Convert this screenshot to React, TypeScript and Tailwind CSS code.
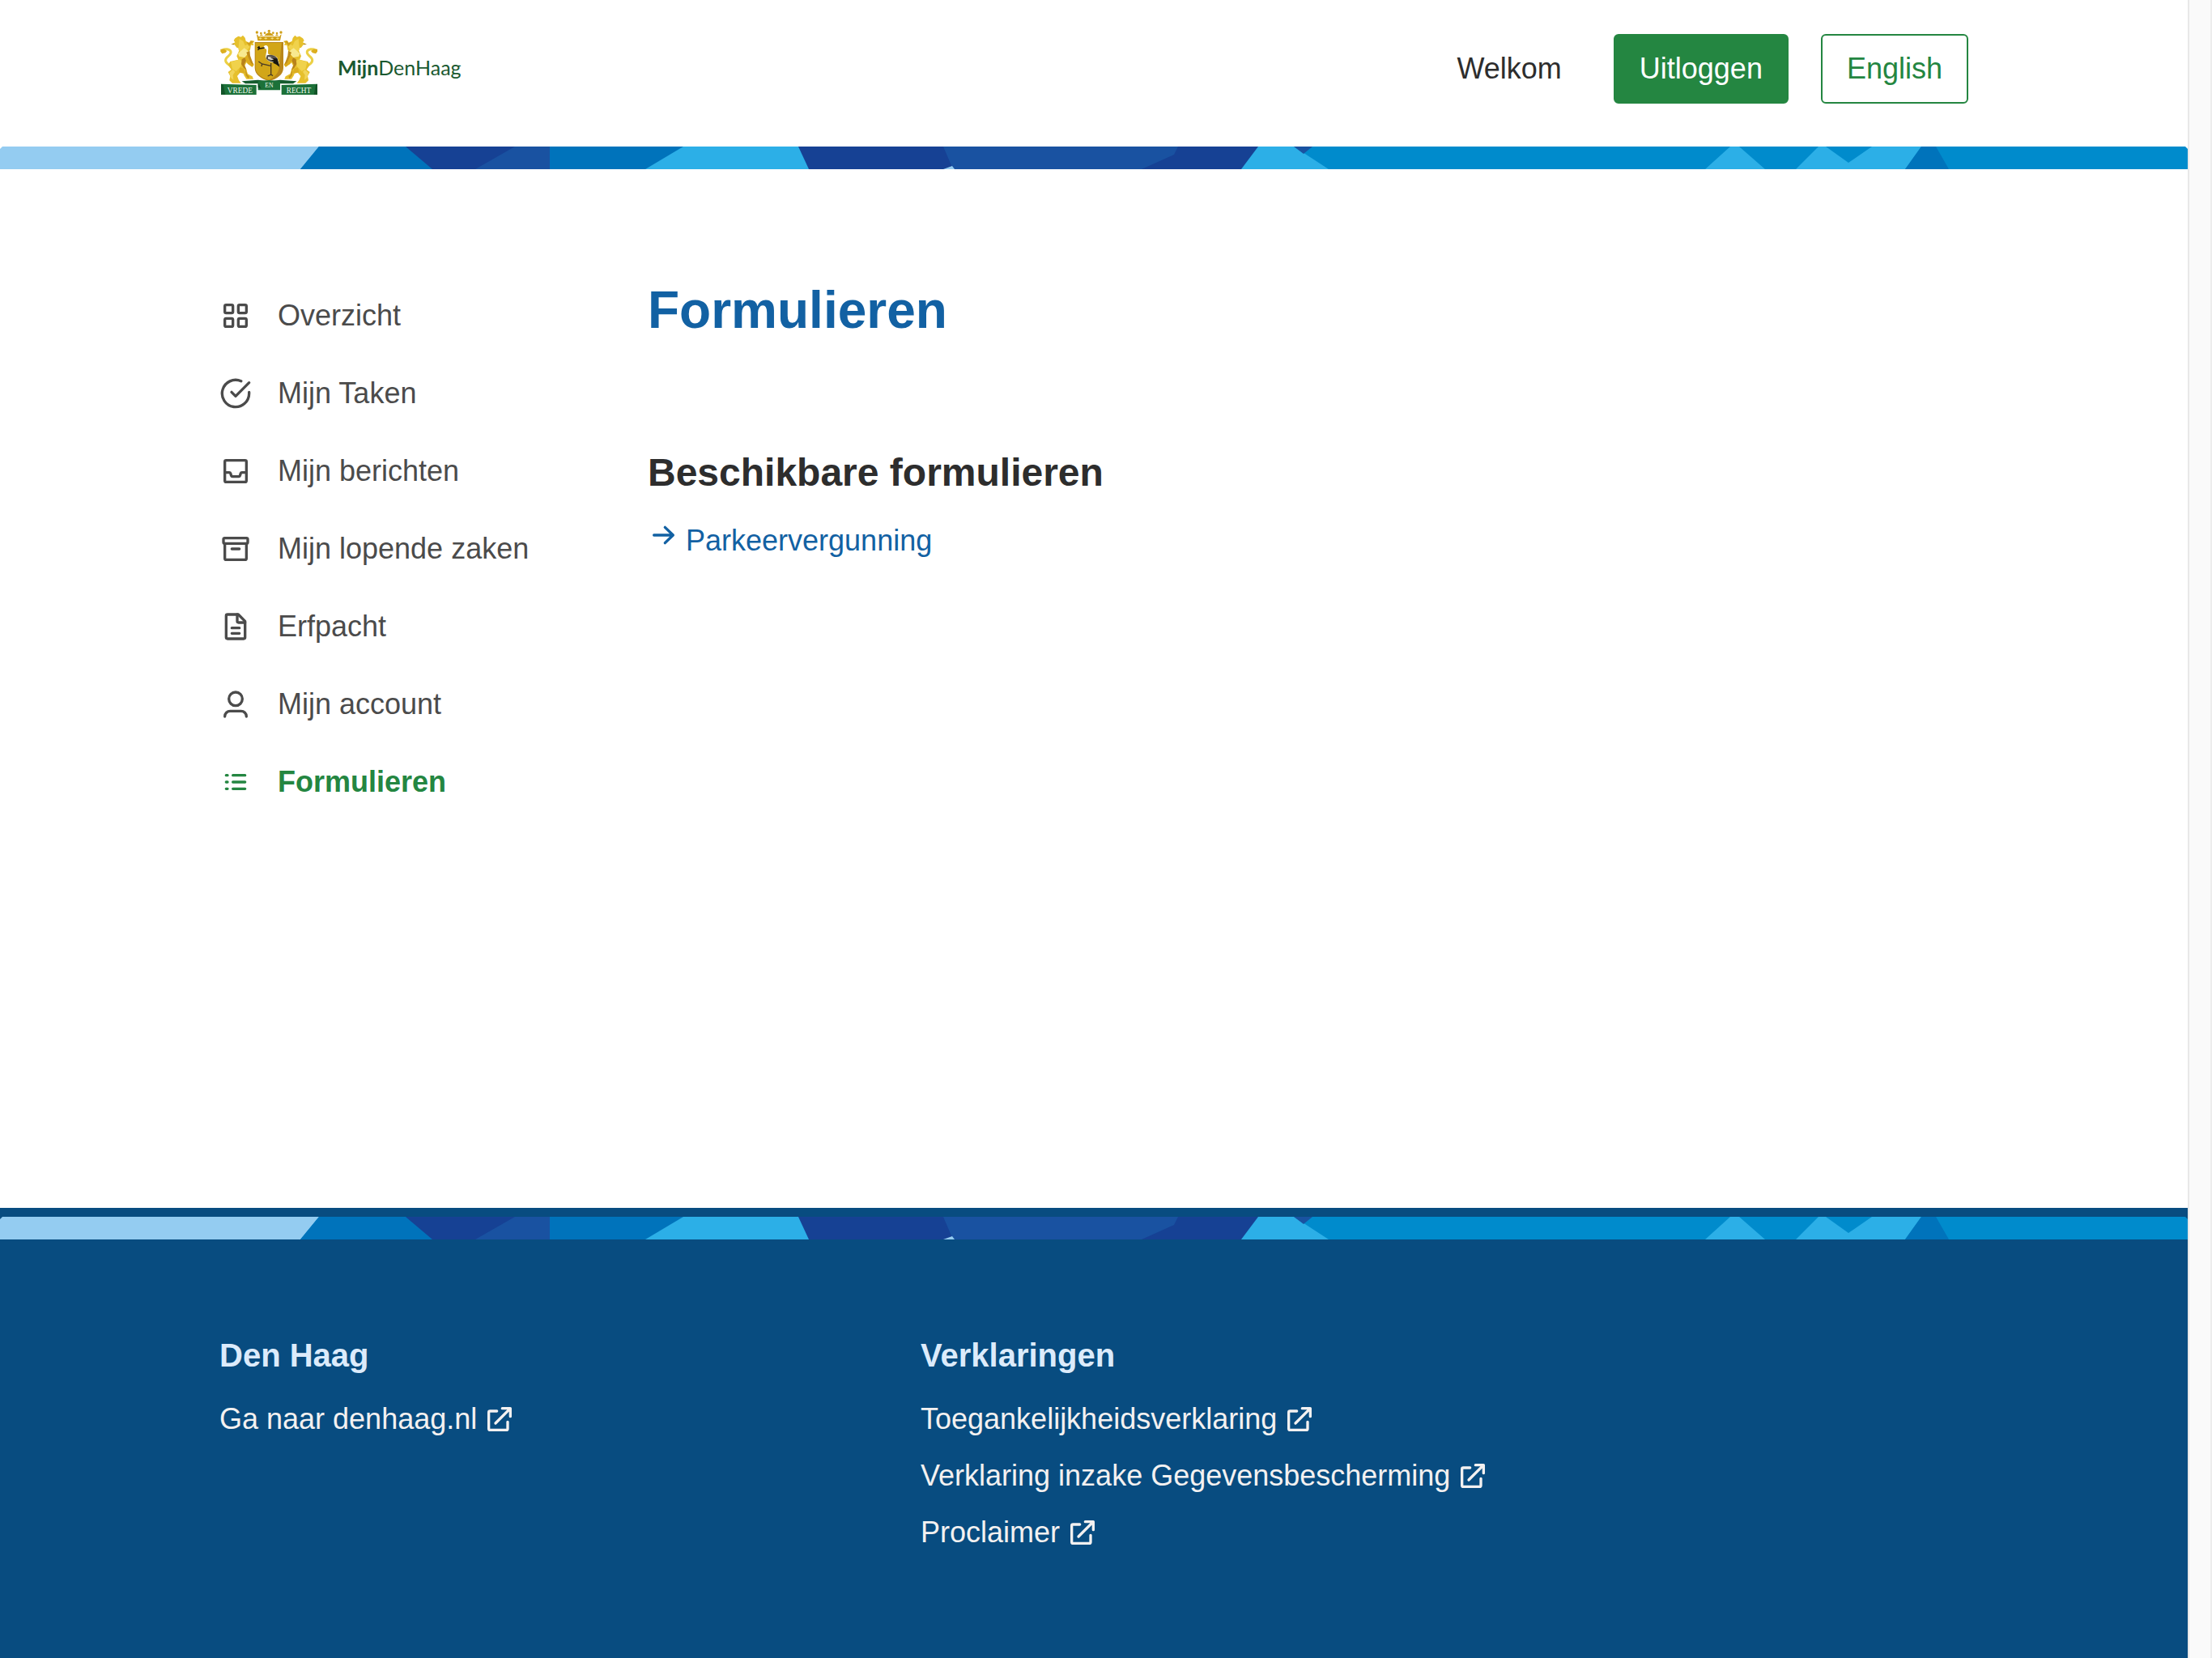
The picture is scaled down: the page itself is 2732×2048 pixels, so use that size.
import type { ReactNode } from "react";

function Icon({ children, className = "" }: { children: ReactNode; className?: string }) {
  return (
    <svg
      viewBox="0 0 24 24"
      fill="none"
      stroke="currentColor"
      strokeWidth="2"
      strokeLinecap="round"
      strokeLinejoin="round"
      aria-hidden="true"
      className={`size-10 shrink-0 ${className}`}
    >
      {children}
    </svg>
  );
}

const GridIcon = () => (
  <Icon>
    <rect x="4" y="4" width="6" height="6" rx="1" />
    <rect x="14" y="4" width="6" height="6" rx="1" />
    <rect x="4" y="14" width="6" height="6" rx="1" />
    <rect x="14" y="14" width="6" height="6" rx="1" />
  </Icon>
);

const CheckIcon = () => (
  <Icon>
    <path d="M22 11.08V12a10 10 0 1 1-5.93-9.14" />
    <path d="M22 4 12 14.01l-3-3" />
  </Icon>
);

const InboxIcon = () => (
  <Icon>
    <rect x="4" y="4" width="16" height="16" rx="1" />
    <path d="M4 13h3.3a1 1 0 0 1 .95.7l.5 1.6a1 1 0 0 0 .95.7h4.6a1 1 0 0 0 .95-.7l.5-1.6a1 1 0 0 1 .95-.7H20" />
  </Icon>
);

const ArchiveIcon = () => (
  <Icon>
    <rect x="3" y="4" width="18" height="4" rx="1" />
    <path d="M4 8v11a1 1 0 0 0 1 1h14a1 1 0 0 0 1-1V8M9.2 12h5.6" />
  </Icon>
);

const DocumentIcon = () => (
  <Icon>
    <path d="M6 3h8l5 5v12a1 1 0 0 1-1 1H6a1 1 0 0 1-1-1V4a1 1 0 0 1 1-1z" />
    <path d="M13.2 3v5a1 1 0 0 0 1 1H19M9.2 13h5.6M9.2 17h5.6" />
  </Icon>
);

const UserIcon = () => (
  <Icon>
    <circle cx="12" cy="8" r="5" />
    <path d="M4 21a4 4 0 0 1 4-4h8a4 4 0 0 1 4 4" />
  </Icon>
);

const ListIcon = () => (
  <Icon>
    <path d="M10 7h9M10 12h9M10 17h9M5 7h1M5 12h1M5 17h1" />
  </Icon>
);

const ExternalIcon = () => (
  <Icon>
    <path d="M10 6H5a1 1 0 0 0-1 1v12a1 1 0 0 0 1 1h12a1 1 0 0 0 1-1v-5M9 15 20 4M14 4h6v6" />
  </Icon>
);

const ArrowIcon = () => (
  <Icon className="mb-[14px]">
    <path d="M4.6 12h14M12.8 6.2l6 5.8-6 5.8" />
  </Icon>
);

function Lion() {
  return (
    <>
      <path
        d="M102 184C86 176 78 166 86 155c8-9 19-14 16-24-4-10-21-11-32-5"
        fill="none"
        stroke="#ecd045"
        strokeWidth="9"
      />
      <path d="M64 122l14 0 10 7-6 7-12 3-6-8z" fill="#dcae20" />
      <path
        d="M118 82L130 74 140 77 147 71 155 80 158 92 170 98 176 91 190 92 184 100 187 108 177 107 174 124 168 134 172 150 179 165 188 180 182 188 174 182 166 178 160 172 154 184 160 198 165 214 182 223 186 233 160 233 151 219 146 204 136 210 126 222 132 238 140 248 108 248 97 238 100 222 92 207 104 198 92 181 100 168 130 161 124 148 132 130 134 120 124 116 116 106 104 104 118 97 113 90z"
        fill="#e6c02c"
      />
      <path d="M134 84l14 8 7 17 13-6 4 12-14 16-20 4-8-12z" fill="#f0d24c" />
      <path d="M129 138l23-20 20 15-18 20-21-4z" fill="#f8e98f" />
      <path d="M154 153l18-20-2 17 9 15 8 15-6 8-16-12z" fill="#dcab1d" />
      <path d="M160 134l12-6 2 18 12 34-9-6-11-24z" fill="#c08c1a" />
      <path d="M102 170l32-10 12 8-8 20-16 16-14-8z" fill="#f0d24c" />
      <path d="M143 160l11-7 5 12-7 14 9 22-11-9-9-14z" fill="#b8821b" />
      <path d="M136 190l14 4 6 16-8 2-16-4z" fill="#dcae20" />
      <path d="M97 210l13-12 8 8-8 12 2 18-10-8z" fill="#f1d55a" />
      <path d="M156 190l7 26 8 8-4 8-10-14z" fill="#c9981b" />
      <path d="M103 103l12 0-2 3z" fill="#8f651b" />
      <path d="M160 96l11 3 5-8 12 2-10 8-8 10z" fill="#d1a01b" />
    </>
  );
}

function Crest() {
  return (
    <svg viewBox="60 48 366 246" className="h-[82px] w-[122px] shrink-0" role="img" aria-label="Wapen van Den Haag">
      <Lion />
      <g transform="translate(487 0) scale(-1 1)">
        <Lion />
      </g>
      {/* crown */}
      <g fill="#cf9f17">
        <path d="M202 91l-4-24 9 7 8-8 9 8 9-9 11-6 11 6 9 9 9-8 8 8 9-7-5 24z" />
        <circle cx="199" cy="60" r="5" />
        <circle cx="214" cy="63" r="4" />
        <circle cx="228" cy="62" r="4" />
        <circle cx="244" cy="55" r="5" />
        <circle cx="259" cy="62" r="4" />
        <circle cx="273" cy="63" r="4" />
        <circle cx="288" cy="60" r="5" />
      </g>
      <path d="M204 74h80" stroke="#fff" strokeWidth="3" />
      <g fill="#f6df7b">
        <path d="M205 82l7-3 6 3-6 4zM225 82l7-3 6 3-6 4zM249 82l7-3 6 3-6 4zM269 82l7-3 6 3-6 4z" />
      </g>
      {/* shield */}
      <path d="M191 96h106v96c0 23-23 42-53 48-30-6-53-25-53-48z" fill="#b9861a" />
      <path d="M194 99h96l-8 88c-2 24-18 40-38 49-28-7-50-24-50-45z" fill="#d2a618" />
      {/* stork */}
      <path d="M224 118c-3-10 12-14 16-4 3 9-3 18 2 27 9 4 25 3 32 13l8 22-16-6c-16 2-30-4-34-17-2-10 5-22 2-31z" fill="#fff" />
      <path d="M236 145c15-4 30 0 38 10l8 29-14-12c-14-3-29-5-35-16z" fill="#55504a" />
      <path d="M258 156l16 1 9 31-12-9-12-6 2-6-10-2z" fill="#17150f" />
      <path d="M240 150l14 2-5 3 13 5-8 3-14-5z" fill="#d8d6d2" />
      <path d="M227 117l-18 3-8-5M209 120l-7 5M209 120l-3-9" fill="none" stroke="#17150f" strokeWidth="4" />
      <path d="M251 174v42l-12 6M251 216l7 5M250 184l-32-7-13-9M218 177l-2 9" fill="none" stroke="#473a27" strokeWidth="4" />
      {/* ribbons */}
      <path d="M143 241l60-5 41 5 41-5 61 5-13 9H156z" fill="#155c2e" />
      <path d="M203 241l41-4 41 4v33h-82z" fill="#1c7139" />
      <path d="M203 246l12 23-12-5z" fill="#104c25" />
      <path d="M66 251l131 4v36H66z" fill="#1c7139" />
      <path d="M423 251l-133 4v36h133z" fill="#1c7139" />
      <path d="M66 251l8 3 8 37H66zM423 251l-6 3-7 37h13z" fill="#125429" />
      <g fill="#eef6ec" fontFamily="Liberation Serif, serif" textAnchor="middle">
        <text x="136" y="284" fontSize="28">VREDE</text>
        <text x="244" y="265" fontSize="23">EN</text>
        <text x="354" y="284" fontSize="28">RECHT</text>
      </g>
    </svg>
  );
}

/* Decorative band of overlapping coloured facets */
function Band() {
  return (
    <svg viewBox="0 0 2702 28" preserveAspectRatio="none" className="block h-7 w-full" aria-hidden="true">
      <path d="M380 0H2699l3 3V28H370z" fill="#008bcc" />
      <path d="M3 0H394L371 28H0V3z" fill="#94ccf1" />
      <path d="M394 0H850V28H371z" fill="#0073bb" />
      <path d="M501 0H679V28H534z" fill="#164194" />
      <path d="M636 0H679V28H587z" fill="#1952a1" />
      <path d="M844 0H990L1002 28H797z" fill="#2cafe7" />
      <path d="M986 0H1560V28H999z" fill="#164194" />
      <path d="M1165 0H1455L1450 10 1410 28H1177z" fill="#1952a1" />
      <path d="M1165 28L1176 24 1179 28z" fill="#94ccf1" />
      <path d="M1554 0H1598L1641 28H1533z" fill="#2cafe7" />
      <path d="M1598 0H1621L1610 9z" fill="#1952a1" />
      <path d="M2137 0H2148L2180 28H2106z" fill="#2cafe7" />
      <path d="M2246 0H2255L2283 20 2312 0H2373L2353 28H2218z" fill="#2cafe7" />
      <path d="M2373 0H2391L2407 28H2353z" fill="#0073bb" />
    </svg>
  );
}

const navItems = [
  { label: "Overzicht", icon: <GridIcon /> },
  { label: "Mijn Taken", icon: <CheckIcon /> },
  { label: "Mijn berichten", icon: <InboxIcon /> },
  { label: "Mijn lopende zaken", icon: <ArchiveIcon /> },
  { label: "Erfpacht", icon: <DocumentIcon /> },
  { label: "Mijn account", icon: <UserIcon /> },
  { label: "Formulieren", icon: <ListIcon />, active: true },
];

const footerColumns = [
  { title: "Den Haag", width: "w-[866px]", links: ["Ga naar denhaag.nl"] },
  {
    title: "Verklaringen",
    width: "flex-1",
    links: ["Toegankelijkheidsverklaring", "Verklaring inzake Gegevensbescherming", "Proclaimer"],
  },
];

export default function App() {
  return (
    <div className="flex min-h-screen bg-white font-['Liberation_Sans',Arial,sans-serif] text-[36px] leading-[54px] text-[#2d2d2d]">
      <div className="flex min-w-0 flex-1 flex-col">
        <header>
          <div className="mx-auto flex max-w-[2160px] items-start justify-between pt-9 pb-[53px]">
            <a href="#" className="flex items-center gap-6">
              <Crest />
              <span className="pt-3 font-[Lato,sans-serif] text-[25px] leading-8 text-[#1a5930]">
                <b className="font-bold">Mijn</b>DenHaag
              </span>
            </a>
            <div className="flex items-center pt-[6px]">
              <span className="mr-16">Welkom</span>
              <button
                type="button"
                className="mr-10 h-[86px] rounded-md border-2 border-[#248641] bg-[#248641] px-[30px] text-white"
              >
                Uitloggen
              </button>
              <button
                type="button"
                className="h-[86px] rounded-md border-2 border-[#248641] bg-white px-[30px] text-[#248641]"
              >
                English
              </button>
            </div>
          </div>
          <Band />
        </header>

        <div className="mx-auto flex w-full max-w-[2160px] flex-1 pt-[133px]">
          <nav className="w-[529px] shrink-0" aria-label="Hoofdmenu">
            <ul>
              {navItems.map((item) => (
                <li key={item.label}>
                  <a
                    href="#"
                    aria-current={item.active ? "page" : undefined}
                    className={`flex h-24 items-center gap-8 ${
                      item.active ? "font-bold text-[#248641]" : "text-[#4b4b4b]"
                    }`}
                  >
                    {item.icon}
                    {item.label}
                  </a>
                </li>
              ))}
            </ul>
          </nav>
          <main className="flex-1">
            <h1 className="text-[64px] leading-[82px] font-bold text-[#1261a3]">Formulieren</h1>
            <h2 className="mt-[131px] text-[48px] leading-[58px] font-bold">Beschikbare formulieren</h2>
            <a href="#" className="mt-7 inline-flex items-center gap-[7px] text-[#1261a3]">
              <ArrowIcon />
              Parkeervergunning
            </a>
          </main>
        </div>

        <footer className="bg-[#084c80] pt-[11px] text-[#f3f1f1]">
          <Band />
          <div className="mx-auto flex max-w-[2160px] pt-[119px] pb-[120px]">
            {footerColumns.map((column) => (
              <section key={column.title} className={column.width}>
                <h2 className="mb-5 text-[40px] leading-[48px] font-bold text-[#dcebfb]">{column.title}</h2>
                <ul>
                  {column.links.map((link) => (
                    <li key={link} className="flex h-[70px] items-center">
                      <a href="#" className="flex items-center gap-2">
                        {link}
                        <ExternalIcon />
                      </a>
                    </li>
                  ))}
                </ul>
              </section>
            ))}
          </div>
        </footer>
      </div>
      <div className="w-[30px] shrink-0 border-r-2 border-l-2 border-r-[#ededed] border-l-[#e8e8e8] bg-[#fafafa]" />
    </div>
  );
}
